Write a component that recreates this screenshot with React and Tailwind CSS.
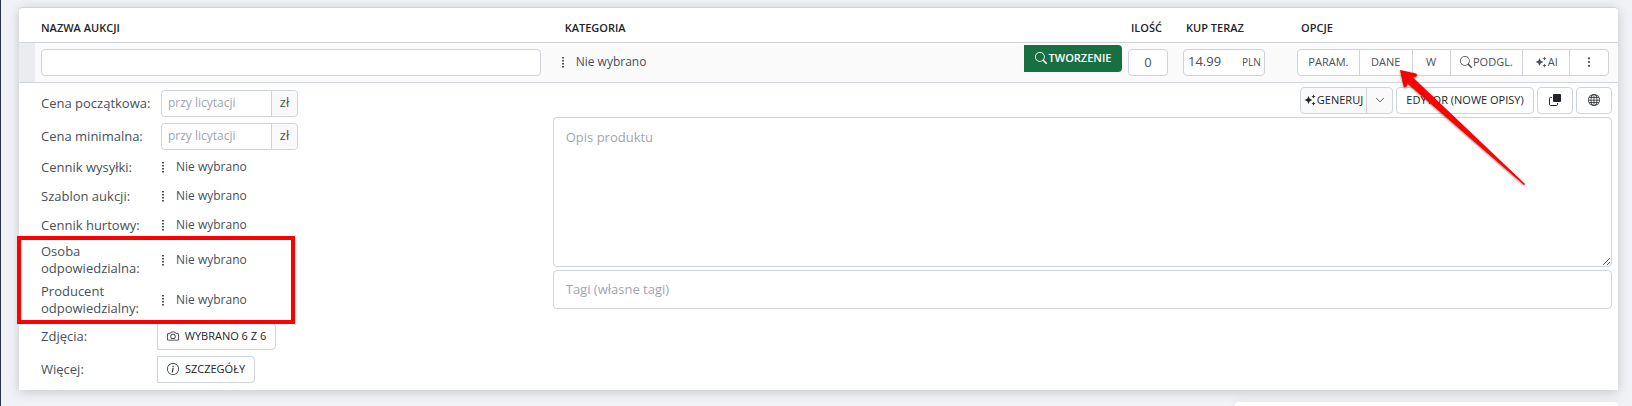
import { BsCamera, BsChevronDown, BsGlobe, BsInfoCircle, BsSearch, BsThreeDotsVertical } from "react-icons/bs";
import { MdAutoAwesome } from "react-icons/md";
import clsx from "clsx";

const DotsIcon = () => (
  <svg viewBox="0 0 4 12" className="h-3 w-1 fill-[#495057]" aria-hidden="true">
    <rect x="1" y="1" width="2" height="1.5" />
    <rect x="1" y="4" width="2" height="1.5" />
    <rect x="1" y="7" width="2" height="1.5" />
    <rect x="1" y="10" width="2" height="1.5" />
  </svg>
);

const CopyIcon = () => (
  <svg viewBox="0 0 12 12" className="size-3" aria-hidden="true">
    <rect x="4" y="0" width="8" height="8" rx="1" fill="currentColor" />
    <path d="M3 3.5H1.5a1 1 0 0 0-1 1v6a1 1 0 0 0 1 1h6a1 1 0 0 0 1-1V9" fill="none" stroke="currentColor" />
  </svg>
);

const Arrow = () => (
  <svg
    viewBox="0 0 132 122"
    className="pointer-events-none absolute top-[58px] right-[90px] h-[122px] w-[132px] drop-shadow-[0_1px_1px_rgba(0,0,0,0.5)]"
    aria-hidden="true"
  >
    <path d="M4 4 L20 7.5 Q22 9 20 10.5 L17 11.5 L129 118 L128 119 L11.5 17.5 L10.5 20.5 Q8.5 22 7.5 20 Z" fill="#f00" />
  </svg>
);

const PickerButton = ({ id }) => (
  <button type="button" id={id} className="flex items-center gap-[11px] text-xs text-[#495057]">
    <DotsIcon />
    <span>Nie wybrano</span>
  </button>
);

const PriceField = ({ id }) => (
  <div className="flex h-[27px] w-[137px] rounded border border-[#ced4da]">
    <input
      id={id}
      type="text"
      placeholder="przy licytacji"
      className="w-[109px] rounded-l px-1.5 text-xs outline-none placeholder:text-[#a1a5b0]"
    />
    <span className="flex flex-1 items-center justify-center rounded-r border-l border-[#ced4da] bg-[#f9f9fa] text-[13px]">
      zł
    </span>
  </div>
);

const Row = ({ label, htmlFor, className, flush, children }) => (
  <div className={clsx("flex items-center", className)}>
    <label htmlFor={htmlFor} className="w-[116px] pr-2 text-[13px] leading-[17px] whitespace-nowrap">
      {label}
    </label>
    <div className={flush ? "" : "pl-1"}>{children}</div>
  </div>
);

const options = [
  { label: "PARAM.", width: "w-[62px]" },
  { label: "DANE", width: "w-[53px]" },
  { label: "W", width: "w-[38px]" },
  { label: "PODGL.", width: "w-[73px]", icon: <BsSearch className="size-3" /> },
  { label: "AI", width: "w-[47px]", icon: <MdAutoAwesome className="size-3" /> },
  { label: "", title: "Więcej opcji", width: "w-[38px]", icon: <BsThreeDotsVertical className="size-3" /> },
];

const outlineButton =
  "flex h-[27px] items-center justify-center gap-1.5 rounded border border-[#ced4da] bg-white text-[11px] font-medium text-[#212529]";

const App = () => {
  return (
    <div className="flex min-h-screen flex-col border-l border-[#2b3144] bg-[#f1f2f5] pt-[7px] pr-3.5 pl-[18px] font-['Open_Sans',sans-serif] text-[#495057]">
      <div className="relative rounded-t border-t border-[#ced4da] bg-white shadow-[0_2px_12px_rgba(0,0,0,0.18)]">
        <table className="w-full table-fixed border-collapse text-left">
          <colgroup>
            <col className="w-4" />
            <col className="w-[32%]" />
            <col />
            <col className="w-[55px]" />
            <col className="w-[114px]" />
            <col className="w-[327px]" />
          </colgroup>
          <thead>
            <tr className="h-[34px] border-b border-[#ced4da] text-[11px] text-[#212529] [&>th]:pt-1.5 [&>th]:font-semibold">
              <td />
              <th className="pl-1.5">NAZWA AUKCJI</th>
              <th className="pl-[18px]">KATEGORIA</th>
              <th className="pl-[9px]">ILOŚĆ</th>
              <th className="pl-[9px]">KUP TERAZ</th>
              <th className="pl-2.5">OPCJE</th>
            </tr>
          </thead>
          <tbody>
            <tr className="h-10 border-b border-[#ced4da] bg-[#fafafa]">
              <td className="bg-[#ebecf0]" />
              <td className="pr-1.5 pl-1.5">
                <input
                  type="text"
                  aria-label="Nazwa aukcji"
                  className="block h-[27px] w-full rounded border border-[#ced4da] bg-white px-2 text-[13px] outline-none"
                />
              </td>
              <td className="pl-3.5 align-top">
                <div className="flex justify-between pt-0.5">
                  <div className="flex h-[34px] items-center">
                    <PickerButton />
                  </div>
                  <button
                    type="button"
                    className="flex h-[27px] w-[98px] items-center justify-center gap-0.5 rounded-r bg-[#176f42] text-[11px] font-semibold text-white"
                  >
                    <BsSearch className="size-3" />
                    TWORZENIE
                  </button>
                </div>
              </td>
              <td className="pl-1.5">
                <input
                  type="text"
                  aria-label="Ilość"
                  defaultValue="0"
                  className="block h-[27px] w-10 rounded border border-[#ced4da] bg-white text-center text-[13px] outline-none"
                />
              </td>
              <td className="pl-1.5">
                <div className="flex h-[27px] w-[82px] items-center rounded border border-[#ced4da] bg-white">
                  <input
                    type="text"
                    aria-label="Kup teraz"
                    defaultValue="14.99"
                    className="w-[54px] pl-1 text-[13px] outline-none"
                  />
                  <span className="pl-1 text-[10px]">PLN</span>
                </div>
              </td>
              <td className="pl-1.5">
                <div className="flex h-[27px] w-[312px] divide-x divide-[#ced4da] rounded border border-[#ced4da] bg-white">
                  {options.map((option) => (
                    <button
                      key={option.label}
                      type="button"
                      aria-label={option.title}
                      className={clsx("flex items-center justify-center gap-px text-[11px] font-medium", option.width)}
                    >
                      {option.icon}
                      {option.label}
                    </button>
                  ))}
                </div>
              </td>
            </tr>
          </tbody>
        </table>

        <div className="flex pt-1 pr-1.5 pb-1 pl-[22px]">
          {/* Auction parameters */}
          <div className="w-[32%] shrink-0">
            <Row label="Cena początkowa:" htmlFor="start-price" className="h-[33px]">
              <PriceField id="start-price" />
            </Row>
            <Row label="Cena minimalna:" htmlFor="min-price" className="h-[33px]">
              <PriceField id="min-price" />
            </Row>
            <Row label="Cennik wysyłki:" htmlFor="shipping" className="h-[29px]">
              <PickerButton id="shipping" />
            </Row>
            <Row label="Szablon aukcji:" htmlFor="template" className="h-[29px]">
              <PickerButton id="template" />
            </Row>
            <Row label="Cennik hurtowy:" htmlFor="wholesale" className="h-[29px]">
              <PickerButton id="wholesale" />
            </Row>
            <div className="relative">
              <Row label={<>Osoba<br />odpowiedzialna:</>} htmlFor="person" className="h-10">
                <PickerButton id="person" />
              </Row>
              <Row label={<>Producent<br />odpowiedzialny:</>} htmlFor="producer" className="h-10">
                <PickerButton id="producer" />
              </Row>
              <div className="pointer-events-none absolute -inset-y-1 -left-6 w-[278px] border-4 border-[#f00]" />
            </div>
            <Row label="Zdjęcia:" htmlFor="photos" className="h-[33px]" flush>
              <button type="button" id="photos" className={clsx(outlineButton, "w-[119px] rounded-l-none")}>
                <BsCamera className="size-3" />
                WYBRANO 6 Z 6
              </button>
            </Row>
            <Row label="Więcej:" htmlFor="details" className="h-[33px]" flush>
              <button type="button" id="details" className={clsx(outlineButton, "w-[98px] rounded-l-none")}>
                <BsInfoCircle className="size-3" />
                SZCZEGÓŁY
              </button>
            </Row>
          </div>

          {/* Description */}
          <div className="flex flex-1 flex-col pl-[9px]">
            <div className="flex justify-end gap-[3px]">
              <div className="flex h-[27px] divide-x divide-[#ced4da] rounded border border-[#ced4da] bg-[#f9f9fa] text-[#212529]">
                <button type="button" className="flex w-[66px] items-center justify-center gap-px text-[11px] font-medium">
                  <MdAutoAwesome className="size-3" />
                  GENERUJ
                </button>
                <button type="button" aria-label="Rozwiń" className="flex w-[25px] items-center justify-center">
                  <BsChevronDown className="size-2.5" />
                </button>
              </div>
              <button type="button" className={clsx(outlineButton, "w-[138px]")}>
                EDYTOR (NOWE OPISY)
              </button>
              <button type="button" aria-label="Kopiuj" className={clsx(outlineButton, "w-9")}>
                <CopyIcon />
              </button>
              <button type="button" aria-label="Język" className={clsx(outlineButton, "w-9")}>
                <BsGlobe className="size-3" />
              </button>
            </div>
            <textarea
              aria-label="Opis produktu"
              placeholder="Opis produktu"
              className="mt-[3px] block h-[150px] w-full rounded border border-[#ced4da] px-3 py-2.5 text-[13px] outline-none placeholder:text-[#a1a5b0]"
            />
            <input
              type="text"
              aria-label="Tagi"
              placeholder="Tagi (własne tagi)"
              className="mt-[3px] h-[39px] w-full rounded border border-[#ced4da] px-3 text-[13px] outline-none placeholder:text-[#a1a5b0]"
            />
          </div>
        </div>
        <Arrow />
      </div>
      <div className="mt-3 h-1 w-[383px] self-end rounded-t bg-white shadow-[0_0_12px_rgba(0,0,0,0.08)]" />
    </div>
  );
};

export default App;
